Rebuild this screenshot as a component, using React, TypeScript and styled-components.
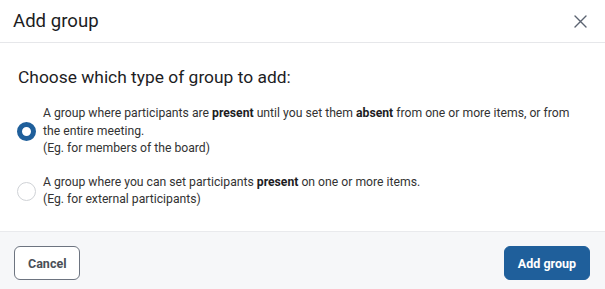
import { createGlobalStyle, styled } from "styled-components";

const GlobalStyle = createGlobalStyle`
  html, body {
    margin: 0;
    padding: 0;
    background: #ffffff;
  }
  body {
    font-family: Roboto, "Liberation Sans", Arial, sans-serif;
    color: #222;
  }
`;

const Dialog = styled.div`
  width: 605px;
  height: 289px;
  display: flex;
  flex-direction: column;
  background: #fff;
  box-sizing: border-box;
`;

const Header = styled.div`
  height: 42px;
  display: flex;
  align-items: center;
  justify-content: space-between;
  padding: 0 13px 0 13px;
  border-bottom: 1px solid #e6e7ea;
`;

const Title = styled.h2`
  margin: 0;
  font-size: 18.6px;
  font-weight: 400;
  color: #1d1d1f;
`;

const CloseButton = styled.button`
  border: none;
  background: none;
  padding: 0;
  width: 24px;
  height: 24px;
  display: flex;
  align-items: center;
  justify-content: center;
  color: #5b6371;
  cursor: pointer;
`;

const Body = styled.div`
  flex: 1;
  padding: 24px 18px 0 17px;
`;

const Question = styled.h3`
  margin: 0 0 18px 1px;
  font-size: 17.4px;
  font-weight: 400;
  color: #1d1d1f;
`;

const Options = styled.div`
  display: flex;
  flex-direction: column;
  gap: 16px;
`;

const Option = styled.label`
  display: flex;
  align-items: center;
  gap: 7px;
  cursor: pointer;
`;

const Radio = styled.span<{ $checked?: boolean }>`
  flex: none;
  width: 19px;
  height: 19px;
  border-radius: 50%;
  box-sizing: border-box;
  border: ${(p) => (p.$checked ? "5px solid #1f5f9b" : "1.5px solid #cfd2d6")};
  background: #fff;
`;

const OptionText = styled.div`
  font-size: 12.2px;
  line-height: 17.5px;
  color: #333;

  b {
    font-weight: 700;
    color: #1d1d1f;
  }
`;

const Footer = styled.div`
  height: 58px;
  box-sizing: border-box;
  display: flex;
  align-items: flex-start;
  justify-content: space-between;
  padding: 14px 15px 0 14px;
  background: #f6f7f9;
  border-top: 1px solid #e9eaed;
`;

const Button = styled.button<{ $primary?: boolean }>`
  height: 34px;
  padding: 0 13px;
  border-radius: 6px;
  font-family: inherit;
  font-size: 12.5px;
  font-weight: 700;
  cursor: pointer;
  border: ${(p) => (p.$primary ? "1px solid #1f5f9b" : "1px solid #6d7480")};
  background: ${(p) => (p.$primary ? "#1f5f9b" : "#fff")};
  color: ${(p) => (p.$primary ? "#fff" : "#4a4f57")};
`;

export default function App() {
  return (
    <>
      <GlobalStyle />
      <Dialog>
        <Header>
          <Title>Add group</Title>
          <CloseButton aria-label="Close">
            <svg width="13" height="13" viewBox="0 0 13 13" fill="none">
              <path d="M1 1L12 12M12 1L1 12" stroke="currentColor" strokeWidth="1.4" strokeLinecap="round" />
            </svg>
          </CloseButton>
        </Header>
        <Body>
          <Question>Choose which type of group to add:</Question>
          <Options>
            <Option>
              <Radio $checked />
              <OptionText>
                A group where participants are <b>present</b> until you set them <b>absent</b> from one or more items, or from
                <br />
                the entire meeting.
                <br />
                (Eg. for members of the board)
              </OptionText>
            </Option>
            <Option>
              <Radio />
              <OptionText>
                A group where you can set participants <b>present</b> on one or more items.
                <br />
                (Eg. for external participants)
              </OptionText>
            </Option>
          </Options>
        </Body>
        <Footer>
          <Button>Cancel</Button>
          <Button $primary>Add group</Button>
        </Footer>
      </Dialog>
    </>
  );
}
